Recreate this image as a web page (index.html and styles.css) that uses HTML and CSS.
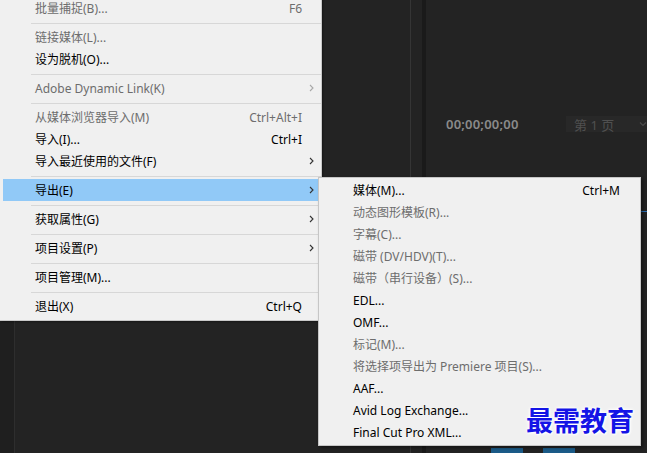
FILE: index.html
```html
<!DOCTYPE html>
<html lang="zh-CN">
<head>
<meta charset="utf-8">
<title>导出菜单</title>
<link rel="stylesheet" href="styles.css">
</head>
<body>
<div class="bg">
  <div class="strip"></div>
  <div class="panel-a"></div>
  <div class="gutter"></div>
  <div class="panel-b">
    <div class="tc-row">
      <span class="tc">00;00;00;00</span>
      <div class="page-select"><span class="page-text">第 1 页</span><svg class="page-chev" width="8" height="6" viewBox="0 0 8 6"><polyline points="1,1.5 4,4.5 7,1.5" fill="none" stroke="#4a4a4a" stroke-width="1.2"/></svg></div>
    </div>
    <div class="accent-row"><div class="accent-line"></div></div>
    <div class="bottom-row"><div class="blue-block"></div><div class="blue-block"></div></div>
  </div>
</div>

<div class="menu main-menu">
  <div class="item disabled"><span class="label">批量捕捉(B)...</span><span class="key">F6</span><span class="arrow"></span></div>
  <div class="sep"></div>
  <div class="item disabled"><span class="label">链接媒体(L)...</span><span class="key"></span><span class="arrow"></span></div>
  <div class="item"><span class="label">设为脱机(O)...</span><span class="key"></span><span class="arrow"></span></div>
  <div class="sep"></div>
  <div class="item disabled"><span class="label">Adobe Dynamic Link(K)</span><span class="key"></span><span class="arrow"><svg width="5" height="8" viewBox="0 0 5 8"><polyline points="1,1 4,4 1,7" fill="none" stroke="#a8a8a8" stroke-width="1.1"/></svg></span></div>
  <div class="sep"></div>
  <div class="item disabled"><span class="label">从媒体浏览器导入(M)</span><span class="key">Ctrl+Alt+I</span><span class="arrow"></span></div>
  <div class="item"><span class="label">导入(I)...</span><span class="key">Ctrl+I</span><span class="arrow"></span></div>
  <div class="item"><span class="label">导入最近使用的文件(F)</span><span class="key"></span><span class="arrow"><svg width="5" height="8" viewBox="0 0 5 8"><polyline points="1,1 4,4 1,7" fill="none" stroke="#333" stroke-width="1.1"/></svg></span></div>
  <div class="sep"></div>
  <div class="item active"><span class="label">导出(E)</span><span class="key"></span><span class="arrow"><svg width="5" height="8" viewBox="0 0 5 8"><polyline points="1,1 4,4 1,7" fill="none" stroke="#333" stroke-width="1.1"/></svg></span></div>
  <div class="sep"></div>
  <div class="item"><span class="label">获取属性(G)</span><span class="key"></span><span class="arrow"><svg width="5" height="8" viewBox="0 0 5 8"><polyline points="1,1 4,4 1,7" fill="none" stroke="#333" stroke-width="1.1"/></svg></span></div>
  <div class="sep"></div>
  <div class="item"><span class="label">项目设置(P)</span><span class="key"></span><span class="arrow"><svg width="5" height="8" viewBox="0 0 5 8"><polyline points="1,1 4,4 1,7" fill="none" stroke="#333" stroke-width="1.1"/></svg></span></div>
  <div class="sep"></div>
  <div class="item"><span class="label">项目管理(M)...</span><span class="key"></span><span class="arrow"></span></div>
  <div class="sep"></div>
  <div class="item"><span class="label">退出(X)</span><span class="key">Ctrl+Q</span><span class="arrow"></span></div>
</div>

<div class="menu sub-menu">
  <div class="item"><span class="label">媒体(M)...</span><span class="key">Ctrl+M</span></div>
  <div class="item disabled"><span class="label">动态图形模板(R)...</span></div>
  <div class="item disabled"><span class="label">字幕(C)...</span></div>
  <div class="item disabled"><span class="label">磁带 (DV/HDV)(T)...</span></div>
  <div class="item disabled"><span class="label">磁带（串行设备）(S)...</span></div>
  <div class="item"><span class="label">EDL...</span></div>
  <div class="item"><span class="label">OMF...</span></div>
  <div class="item disabled"><span class="label">标记(M)...</span></div>
  <div class="item disabled"><span class="label">将选择项导出为 Premiere 项目(S)...</span></div>
  <div class="item"><span class="label">AAF...</span></div>
  <div class="item"><span class="label">Avid Log Exchange...</span></div>
  <div class="item"><span class="label">Final Cut Pro XML...</span></div>
</div>

<div class="watermark">最需教育</div>
</body>
</html>
```

FILE: styles.css
```css
* { box-sizing: border-box; }
html, body {
  margin: 0;
  padding: 0;
  width: 647px;
  height: 453px;
  overflow: hidden;
  background: #232323;
  font-family: "Noto Sans", "Noto Sans CJK SC", sans-serif;
}

/* background application panels */
.bg {
  display: flex;
  width: 647px;
  height: 453px;
}
.strip {
  width: 15px;
  background: #1f1f1f;
  border-right: 1px solid #2e2e2e;
}
.panel-a {
  width: 396px;
  background: #232323;
  border-right: 1px solid #353535;
}
.gutter {
  width: 15px;
  background: #232323;
  border-right: 4px solid #1a1a1a;
}
.panel-b {
  flex: 1;
  display: flex;
  flex-direction: column;
  background: #232323;
}
.tc-row {
  display: flex;
  align-items: center;
  margin-top: 116px;
  height: 16px;
  padding-left: 20px;
}
.tc {
  width: 120px;
  color: #8a8a8a;
  font-weight: 600;
  font-size: 13px;
  letter-spacing: 0.2px;
}
.page-select {
  flex: 1;
  height: 16px;
  background: #282828;
  display: flex;
  align-items: center;
  padding-left: 8px;
  color: #505050;
  font-size: 13px;
}
.page-text { flex: 1; }
.page-chev { margin-right: 0; }
.accent-row {
  display: flex;
  justify-content: flex-end;
  margin-top: 79px;
}
.accent-line {
  width: 6px;
  height: 1px;
  background: #2c6fb3;
}
.bottom-row {
  margin-top: auto;
  display: flex;
  gap: 20px;
  padding-left: 65px;
  height: 5px;
}
.blue-block {
  width: 32px;
  background: #1b5b88;
}

/* menus */
.menu {
  position: absolute;
  background: #f0f0f0;
  font-size: 12px;
  color: #000;
}
.main-menu {
  left: 0;
  top: -3px;
  width: 322px;
  padding: 0 3px 3px 3px;
  border-right: 1px solid #c9c9c9;
  border-bottom: 1px solid #c9c9c9;
  box-shadow: 1px 1px 2px rgba(0,0,0,0.35);
}
.item {
  display: flex;
  align-items: center;
  height: 22px;
  white-space: nowrap;
}
.main-menu .item { padding-left: 32px; }
.item .label { flex: 1; }
.item .key { padding-right: 0; }
.item .arrow {
  width: 16px;
  display: flex;
  align-items: center;
  justify-content: center;
  padding-left: 2px;
}
.item.disabled { color: #6d6d6d; }
.item.active { background: #91c9f7; }
.sep {
  height: 7px;
  padding-top: 4px;
  margin-left: 28px;
  margin-right: -3px;
}
.sep::before {
  content: "";
  display: block;
  height: 1px;
  background: #d7d7d7;
}

.sub-menu {
  left: 318px;
  top: 177px;
  width: 323px;
  height: 269px;
  padding: 1px 0 2px 0;
  border: 1px solid #c6c6c6;
  box-shadow: 2px 2px 3px rgba(0,0,0,0.4);
}
.sub-menu .item {
  padding-left: 34px;
  padding-right: 20px;
}

.watermark {
  position: absolute;
  left: 526px;
  top: 402px;
  font-family: "Noto Sans CJK SC", sans-serif;
  font-size: 27px;
  font-weight: 700;
  line-height: 36px;
  color: #1414e6;
  letter-spacing: 0px;
  text-shadow: 0 0 2px #fff, 0 0 3px #fff, 0 0 4px #fff, 1px 1px 2px #fff;
}
```
